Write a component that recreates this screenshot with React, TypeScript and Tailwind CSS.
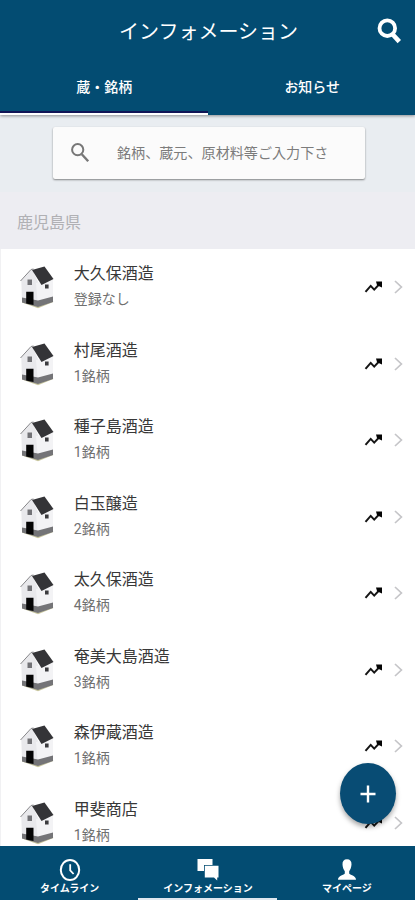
const breweries = [
  { name: '大久保酒造', note: '登録なし' },
  { name: '村尾酒造', note: '1銘柄' },
  { name: '種子島酒造', note: '1銘柄' },
  { name: '白玉醸造', note: '2銘柄' },
  { name: '太久保酒造', note: '4銘柄' },
  { name: '奄美大島酒造', note: '3銘柄' },
  { name: '森伊蔵酒造', note: '1銘柄' },
  { name: '甲斐商店', note: '1銘柄' },
];

function House() {
  return (
    <svg className="h-[44px] w-[36px] shrink-0" viewBox="0 0 36 44">
      <path d="M3 37.5 L19 43.3 L34.3 37 L33 34 L4 34Z" fill="#c9c79f" />
      <path d="M2.3 15.5 L13 4 L20 19 L19 41 L3 37Z" fill="#e9e9ec" />
      <path d="M17 18 L34 14 V36.5 L19 41.5Z" fill="#f3f3f5" />
      <path d="M3 32.5 L19 35.5 L34 31.5 V37 L19 42 L3 37.5Z" fill="#747477" />
      <path d="M1.5 16 L12 4.5 L14.5 4" fill="none" stroke="#858588" strokeWidth="1" />
      <path d="M13 5 L25.5 1.5 L34.5 14 L22.5 20Z" fill="#343437" />
      <path d="M8.5 14.5 h4.5 v5.5 h-4.5Z" fill="#727276" />
      <path d="M26 19.5 h3.6 v4 h-3.6Z" fill="#3b3b3e" />
      <path d="M7.2 26.8 H14.5 V40 L7.2 38.5Z" fill="#050505" />
    </svg>
  );
}

function Trend() {
  return (
    <svg className="h-[14px] w-[20px]" viewBox="0 0 20 14" fill="none">
      <path d="M1.5 11.8 L6.7 5.9 L10.2 9.6 L15.5 4" stroke="#151515" strokeWidth="2" />
      <path d="M12 1.5 H18 V7.5 L15.7 6.5 L13 5Z" fill="#050505" />
    </svg>
  );
}

function Chevron() {
  return (
    <svg className="h-[14px] w-[9px]" viewBox="0 0 9 14" fill="none">
      <path d="M1 1 L7.4 7 L1 13" stroke="#c5c5c8" strokeWidth="1.7" />
    </svg>
  );
}

function BreweryRow({ name, note }: { name: string; note: string }) {
  return (
    <li className="flex h-[76.5px] items-center pl-[18px] pr-[12px]">
      <House />
      <div className="-mt-[1px] ml-[18.8px] flex-1">
        <p className="text-[16px] leading-[26px] text-[#383838]">{name}</p>
        <p className="font-[Roboto,'Noto_Sans_CJK_JP',sans-serif] text-[14px] leading-[29px] text-[#707070]">{note}</p>
      </div>
      <Trend />
      <span className="ml-[10px]">
        <Chevron />
      </span>
    </li>
  );
}

export default function App() {
  return (
    <div className="relative flex h-[900px] w-[415px] flex-col overflow-hidden bg-white font-['Noto_Sans_CJK_JP',sans-serif]">
      <header className="z-10 h-[115px] shrink-0 bg-[#034c72] text-white shadow-[0_1px_3px_rgba(0,0,0,0.4)]">
        <div className="flex h-[61px] items-center pl-[34px] pr-[14px]">
          <h1 className="flex-1 pl-[6px] text-center text-[20px] leading-[28px]">インフォメーション</h1>
          <svg className="h-[26px] w-[24px]" viewBox="0 0 24 26" fill="none" stroke="white">
            <circle cx="10.3" cy="10.2" r="7.8" strokeWidth="3.8" />
            <path d="M15.3 16 L22.3 23.6" strokeWidth="4.6" />
          </svg>
        </div>
        <div className="grid h-[54px] grid-cols-2 text-center text-[14px] font-medium leading-[51px]">
          <div className="border-b-2 border-white pl-[1px] shadow-[inset_0_-2px_0_#101556]">蔵・銘柄</div>
          <div className="pl-[2px]">お知らせ</div>
        </div>
      </header>

      <div className="flex h-[77px] shrink-0 justify-center bg-[#e9edf1] pt-[12px]">
        <div className="mr-[-3px] flex h-[52px] w-[312px] items-center rounded-[2px] bg-[#fbfbfb] pl-[18px] shadow-[0_1px_2px_rgba(0,0,0,0.45)]">
          <svg className="h-[20px] w-[19px]" viewBox="0 0 19 20" fill="none" stroke="#777">
            <circle cx="6.7" cy="6.7" r="5.6" strokeWidth="2" />
            <path d="M10.8 11.2 L17.2 18.2" strokeWidth="2.4" />
          </svg>
          <span className="-mt-[3px] ml-[27px] whitespace-nowrap text-[14.1px] leading-[20px] text-[#7c7c7c]">
            銘柄、蔵元、原材料等ご入力下さ
          </span>
        </div>
      </div>

      <h2 className="h-[57px] shrink-0 bg-[#ededf2] pl-[17px] pt-[1px] text-[16px] leading-[57px] text-[#b0b0b4]">
        鹿児島県
      </h2>

      <ul className="min-h-0 flex-1 overflow-hidden border-l border-[#f1f1f3]">
        {breweries.map((b) => (
          <BreweryRow key={b.name} name={b.name} note={b.note} />
        ))}
      </ul>

      <button
        aria-label="追加"
        className="absolute left-[340px] top-[763px] flex h-[61px] w-[56px] items-center justify-center rounded-[50%] bg-[#084c74] shadow-[0_3px_5px_rgba(0,0,0,0.35)]"
      >
        <svg className="h-[18px] w-[16px]" viewBox="0 0 16 18" stroke="white" strokeWidth="2.4">
          <path d="M8 0.5 V17.5 M0.5 9 H15.5" />
        </svg>
      </button>

      <nav className="z-10 grid h-[54px] shrink-0 grid-cols-3 bg-[#034c72] text-[10px] font-bold leading-[14px] text-white">
        <div className="flex flex-col items-center pl-[1px] pt-[11px]">
          <svg className="h-[24px] w-[22px]" viewBox="0 0 22 24" fill="none" stroke="white">
            <ellipse cx="11" cy="13" rx="9.2" ry="10" strokeWidth="2" />
            <path d="M11.2 7.2 V13.4 L14.6 17" strokeWidth="1.8" />
          </svg>
          <span>タイムライン</span>
        </div>
        <div className="flex flex-col items-center border-b-2 border-[#dfe7ef] pl-[1px] pt-[11px]">
          <svg className="h-[24px] w-[22px]" viewBox="0 0 22 24" fill="white">
            <path d="M0.5 2 H15.5 V8 H7 V14 H0.5Z" />
            <path d="M7.8 8.7 H21.5 V20.5 H20.2 V23.6 L17 20.5 H7.8Z" />
          </svg>
          <span className="whitespace-nowrap">インフォメーション</span>
        </div>
        <div className="flex flex-col items-center pl-[2px] pt-[11px]">
          <svg className="h-[24px] w-[22px]" viewBox="0 0 22 24" fill="white">
            <path d="M11 2.3 C7.9 2.3 6.3 4.3 6.5 7.5 C6.6 10 7.5 12.5 8.8 14.2 V16.4 C8.4 18 2 18.2 2 22.8 H20 C20 18.2 13.6 18 13.2 16.4 V14.2 C14.5 12.5 15.4 10 15.5 7.5 C15.7 4.3 14.1 2.3 11 2.3Z" />
          </svg>
          <span>マイページ</span>
        </div>
      </nav>
    </div>
  );
}
